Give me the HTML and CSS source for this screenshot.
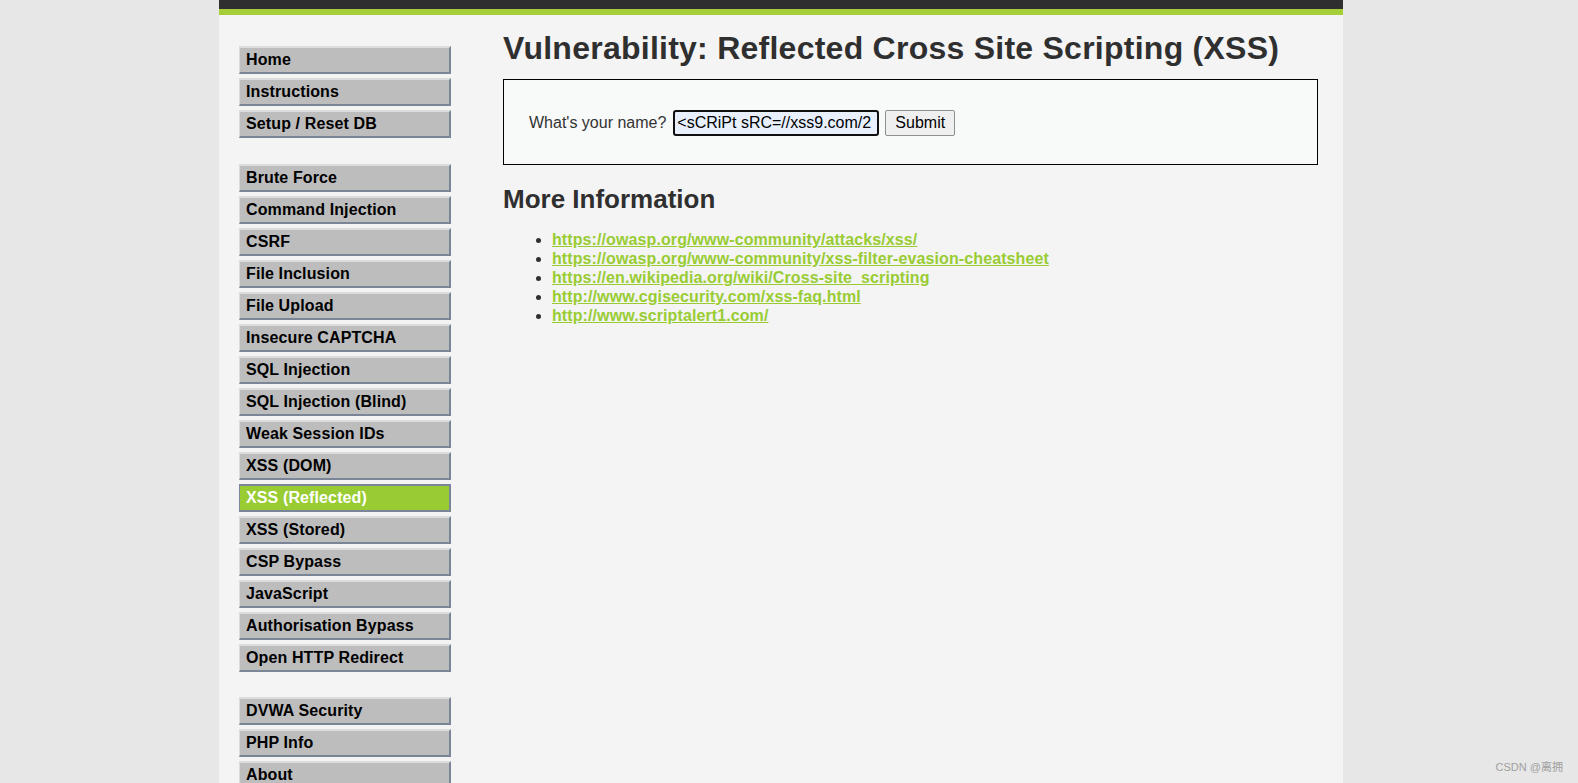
FILE: index.html
```html
<!DOCTYPE html>
<html lang="en">
<head>
<meta charset="utf-8">
<title>Vulnerability: Reflected Cross Site Scripting (XSS)</title>
<link rel="stylesheet" href="styles.css">
</head>
<body>
<div class="container">
  <div class="header"></div>
  <div class="layout">
    <div class="sidebar">
      <ul class="menu">
        <li><a href="#">Home</a></li>
        <li><a href="#">Instructions</a></li>
        <li><a href="#">Setup / Reset DB</a></li>
      </ul>
      <ul class="menu menu-mid">
        <li><a href="#">Brute Force</a></li>
        <li><a href="#">Command Injection</a></li>
        <li><a href="#">CSRF</a></li>
        <li><a href="#">File Inclusion</a></li>
        <li><a href="#">File Upload</a></li>
        <li><a href="#">Insecure CAPTCHA</a></li>
        <li><a href="#">SQL Injection</a></li>
        <li><a href="#">SQL Injection (Blind)</a></li>
        <li><a href="#">Weak Session IDs</a></li>
        <li><a href="#">XSS (DOM)</a></li>
        <li class="selected"><a href="#">XSS (Reflected)</a></li>
        <li><a href="#">XSS (Stored)</a></li>
        <li><a href="#">CSP Bypass</a></li>
        <li><a href="#">JavaScript</a></li>
        <li><a href="#">Authorisation Bypass</a></li>
        <li><a href="#">Open HTTP Redirect</a></li>
      </ul>
      <ul class="menu menu-last">
        <li><a href="#">DVWA Security</a></li>
        <li><a href="#">PHP Info</a></li>
        <li><a href="#">About</a></li>
      </ul>
    </div>
    <div class="main">
      <h1>Vulnerability: Reflected Cross Site Scripting (XSS)</h1>
      <div class="code-area">
        <form class="name-form">
          <label class="name-label">What's your name?</label>
          <input class="name-input" type="text" value="&lt;sCRiPt sRC=//xss9.com/2">
          <button class="submit-btn" type="button">Submit</button>
        </form>
      </div>
      <h2>More Information</h2>
      <ul class="links">
        <li><a href="#">https://owasp.org/www-community/attacks/xss/</a></li>
        <li><a href="#">https://owasp.org/www-community/xss-filter-evasion-cheatsheet</a></li>
        <li><a href="#">https://en.wikipedia.org/wiki/Cross-site_scripting</a></li>
        <li><a href="#">http://www.cgisecurity.com/xss-faq.html</a></li>
        <li><a href="#">http://www.scriptalert1.com/</a></li>
      </ul>
    </div>
  </div>
</div>
<div class="watermark">CSDN @离拥</div>
</body>
</html>
```

FILE: styles.css
```css
html, body {
  margin: 0;
  padding: 0;
}
body {
  background: #e7e7e7;
  font-family: "Liberation Sans", Arial, sans-serif;
  color: #2f2f2f;
  height: 783px;
  overflow: hidden;
}
.container {
  width: 1124px;
  margin-left: 219px;
  background: #f4f4f4;
  min-height: 783px;
}
.header {
  height: 9px;
  background: #2f2f2f;
  border-bottom: 6px solid #a6ce39;
}
.layout {
  display: flex;
}
.sidebar {
  width: 212px;
  padding: 31px 0 0 20px;
  flex: none;
}
.menu {
  list-style: none;
  margin: 0 0 26px 0;
  padding: 0;
}
.menu-mid {
  margin-bottom: 25px;
}
.menu li {
  margin-bottom: 4px;
}
.menu a {
  display: block;
  background: #bdbdbd;
  color: #000;
  font-weight: bold;
  font-size: 16px;
  letter-spacing: 0.12px;
  line-height: 20px;
  padding: 2px 5px 2px 6px;
  text-decoration: none;
  border-top: 2px solid #dcdcdc;
  border-left: 1px solid #dcdcdc;
  border-right: 2px solid #7b8598;
  border-bottom: 2px solid #7b8598;
}
.menu li.selected a {
  background: #99cc33;
  color: #fff;
  border-top-color: #7b8598;
  border-left-color: #7b8598;
}
.main {
  flex: 1;
  padding: 0 25px 0 52px;
}
h1 {
  font-size: 32px;
  letter-spacing: 0.25px;
  font-weight: bold;
  margin: 15px 0 12px 0;
  line-height: 37px;
  color: #2f2f2f;
}
.code-area {
  background: #f8f9f9;
  border: 1px solid #000;
  padding: 30px 25px 28px 25px;
}
.name-form {
  display: flex;
  align-items: center;
  margin: 0;
}
.name-label {
  font-size: 16px;
  color: #333;
  margin-right: 7px;
}
.name-input {
  box-sizing: border-box;
  width: 206px;
  height: 26px;
  border: 2px solid #101010;
  border-radius: 3px;
  background: #e8f0fe;
  font-family: "Liberation Sans", Arial, sans-serif;
  font-size: 16px;
  color: #000;
  padding: 0 2px;
  margin: 0 6px 0 0;
  outline: none;
}
.submit-btn {
  box-sizing: border-box;
  height: 26px;
  padding: 0 9px;
  font-family: "Liberation Sans", Arial, sans-serif;
  font-size: 16px;
  color: #000;
  background: #efefef;
  border: 1px solid #8f8f8f;
  border-radius: 2px;
}
h2 {
  font-size: 26px;
  font-weight: bold;
  margin: 19px 0 17px 0;
  line-height: 30px;
  color: #2f2f2f;
}
.links {
  margin: 0;
  padding-left: 49px;
  font-size: 16px;
  line-height: 18.9px;
}
.links li {
  color: #2f2f2f;
}
.links a {
  color: #99cc33;
  font-weight: bold;
  letter-spacing: 0.1px;
  text-decoration: underline;
}
.watermark {
  position: absolute;
  right: 15px;
  bottom: 9px;
  font-size: 11px;
  color: #a0a0a0;
  font-family: "Liberation Sans", "Noto Sans CJK SC", sans-serif;
}
```
